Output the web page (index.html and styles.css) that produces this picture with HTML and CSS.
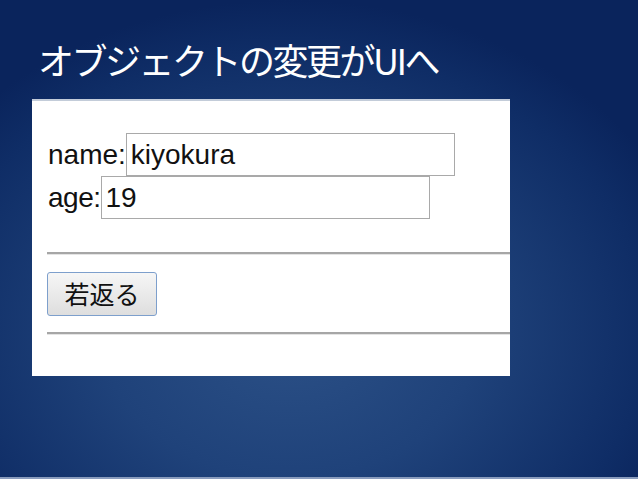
FILE: index.html
```html
<!DOCTYPE html>
<html lang="ja">
<head>
    <meta charset="UTF-8">
    <title>オブジェクトの変更がUIへ</title>
    <link rel="stylesheet" href="styles.css">
</head>
<body>
    <div class="slide">
        <h1 class="slide-title">オブジェクトの変更がUIへ</h1>

        <!-- browser capture -->
        <div class="capture">
            <div class="page">
                <div class="field">
                    <label for="name">name:</label>
                    <input type="text" id="name" value="kiyokura">
                </div>
                <div class="field">
                    <label for="age">age:</label>
                    <input type="text" id="age" value="19">
                </div>
                <hr>
                <button type="button">若返る</button>
                <hr>
            </div>
        </div>
    </div>
</body>
</html>
```

FILE: styles.css
```css
/* Reset */
html, body {
    margin: 0;
    padding: 0;
    box-sizing: border-box;
}

body {
    width: 638px;
    height: 479px;
    overflow: hidden;
}

/* Slide background */
.slide {
    height: 477px;
    border-bottom: 2px solid #8a9cbd;
    background: radial-gradient(ellipse 420px 330px at 290px 330px, #2c5187 0%, #1f427a 45%, #0f2d66 85%, #0a245c 100%);
    overflow: hidden;
}

.slide-title {
    margin: 0;
    padding: 41px 0 0 38px;
    height: 37px;
    line-height: 37px;
    font-family: "Noto Sans CJK JP", "Noto Sans", sans-serif;
    font-size: 36px;
    font-weight: 400;
    color: #ffffff;
    letter-spacing: -2.5px;
}

/* Captured browser page */
.capture {
    width: 478px;
    height: 275px;
    margin: 21px 0 0 32px;
    border-top: 2px solid #c3ccd9;
    background-color: #ffffff;
    overflow: hidden;
}

.page {
    width: 560px;
    padding: 32px 0 0 15px;
    font-family: "Liberation Sans", Arial, sans-serif;
    font-size: 28px;
    color: #111111;
}

.field {
    display: flex;
    align-items: center;
    height: 43px;
}

.field label {
    padding-left: 1px;
}

.field label[for="age"] {
    letter-spacing: -0.5px;
}

.field input {
    box-sizing: border-box;
    width: 329px;
    height: 43px;
    margin: 0;
    padding: 0 4px;
    border: 1px solid #a9a9a9;
    font-family: "Liberation Sans", Arial, sans-serif;
    font-size: 28px;
    color: #111111;
}

hr {
    margin: 0;
    height: 0;
    border: none;
    border-top: 2px solid #a6a6a6;
    border-bottom: 1px solid #e4e4e4;
}

.page hr:first-of-type {
    margin-top: 33px;
}

button {
    display: block;
    box-sizing: border-box;
    width: 110px;
    height: 44px;
    margin: 17px 0 16px 0;
    padding: 0 0 2px 0;
    border: 1px solid #7d9fcc;
    border-radius: 3px;
    background: linear-gradient(#f6f6f6, #dedede);
    font-family: "Noto Sans CJK JP", sans-serif;
    font-size: 25px;
    color: #111111;
}
```
